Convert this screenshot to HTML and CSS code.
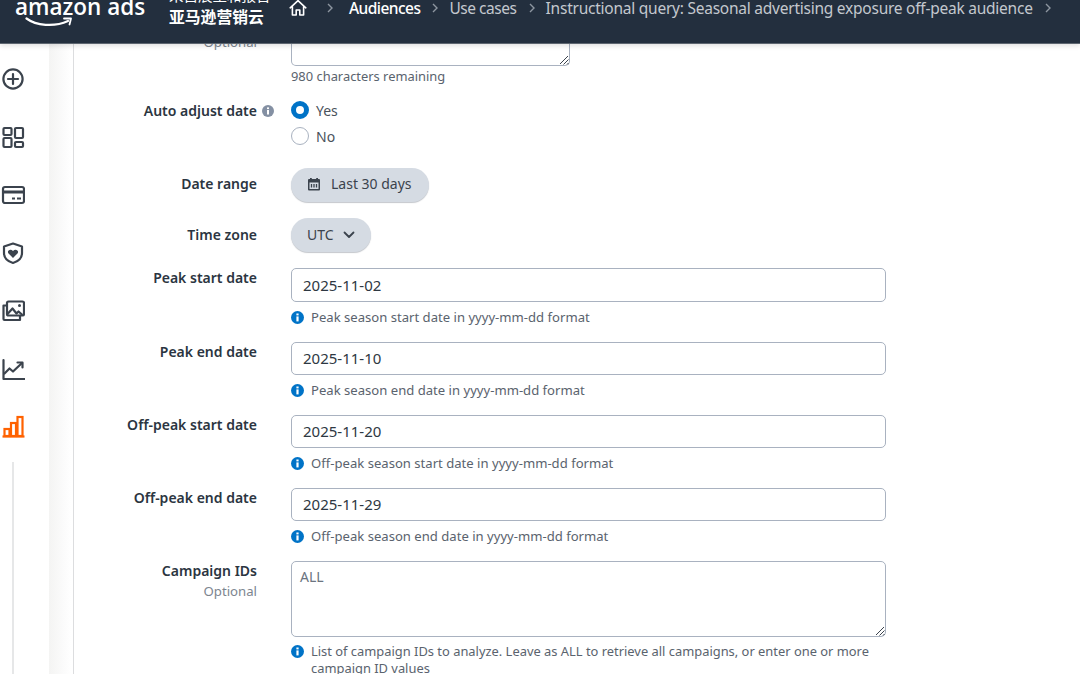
FILE: index.html
```html
<!DOCTYPE html>
<html lang="en">
<head>
<meta charset="utf-8">
<title>Seasonal advertising exposure off-peak audience</title>
<link rel="stylesheet" href="styles.css">
</head>
<body>
<header class="topbar">
  <div class="brand">
    <span class="brand-name">amazon ads</span>
    <svg class="smile" viewBox="0 0 48 11" width="48" height="11"><path d="M1.500 1.500C11 8.500 29 10.500 43 4" fill="none" stroke="#fff" stroke-width="2.200" stroke-linecap="round"/><path d="M39 1.500L46 1.500L44.500 7.500" fill="none" stroke="#fff" stroke-width="1.800" stroke-linecap="round" stroke-linejoin="round"/></svg>
  </div>
  <div class="product">
    <span class="product-top">来自展望和报告</span>
    <span class="product-name">亚马逊营销云</span>
  </div>
  <nav class="crumbs">
    <svg class="home" viewBox="0 0 18 18" width="18" height="18"><path d="M1.200 8.800L9 1.600l7.800 7.200M3.400 7.400V16h3.800v-5h3.600v5h3.800V7.400" fill="none" stroke="#fff" stroke-width="1.600" stroke-linejoin="round" stroke-linecap="round"/></svg>
    <svg class="chev chev-first" viewBox="0 0 8 12" width="8" height="12"><path d="M2 2l4 4-4 4" fill="none" stroke="#8d96a0" stroke-width="1.400"/></svg>
    <span class="crumb crumb-active">Audiences</span>
    <svg class="chev" viewBox="0 0 8 12" width="8" height="12"><path d="M2 2l4 4-4 4" fill="none" stroke="#8d96a0" stroke-width="1.400"/></svg>
    <span class="crumb crumb-use">Use cases</span>
    <svg class="chev" viewBox="0 0 8 12" width="8" height="12"><path d="M2 2l4 4-4 4" fill="none" stroke="#8d96a0" stroke-width="1.400"/></svg>
    <span class="crumb">Instructional query: Seasonal advertising exposure off-peak audience</span>
    <svg class="chev" viewBox="0 0 8 12" width="8" height="12"><path d="M2 2l4 4-4 4" fill="none" stroke="#8d96a0" stroke-width="1.400"/></svg>
  </nav>
</header>
<div class="layout">
  <aside class="rail">
    <svg class="rail-icon" viewBox="0 0 24 24" width="24" height="24"><circle cx="12" cy="12" r="9.600" fill="none" stroke="#3b434d" stroke-width="2.200"/><path d="M12 7v10M7 12h10" stroke="#3b434d" stroke-width="2.200" stroke-linecap="round"/></svg>
    <svg class="rail-icon" viewBox="0 0 24 24" width="24" height="24"><g fill="none" stroke="#3b434d" stroke-width="2.200"><rect x="2.500" y="3" width="8" height="7" rx="1"/><rect x="14" y="3" width="8" height="10" rx="1"/><rect x="2.500" y="13" width="8" height="9" rx="1"/><rect x="14" y="17" width="8" height="5" rx="1"/></g></svg>
    <svg class="rail-icon" viewBox="0 0 24 24" width="24" height="24"><rect x="2" y="4" width="21" height="16" rx="2" fill="none" stroke="#3b434d" stroke-width="2.200"/><path d="M2 9h21" stroke="#3b434d" stroke-width="3"/><path d="M11 15.500h3M16 15.500h4" stroke="#3b434d" stroke-width="2.200"/></svg>
    <svg class="rail-icon" viewBox="0 0 24 24" width="24" height="24"><path d="M12 2.500l9 3v6.500c0 5-4 8.500-9 10-5-1.500-9-5-9-10V5.500z" fill="none" stroke="#3b434d" stroke-width="2.200" stroke-linejoin="round"/><path d="M12 17l-4.700-4.800c-1.600-2.500 2.200-5 4.700-2.200 2.500-2.800 6.300-.3 4.700 2.200z" fill="#3b434d"/></svg>
    <svg class="rail-icon" viewBox="0 0 24 24" width="24" height="24"><g fill="none" stroke="#3b434d" stroke-width="2.200" stroke-linejoin="round"><rect x="6" y="2.500" width="17" height="14" rx="1.500"/><path d="M6 6.500H2.500v13.500a1 1 0 0 0 1 1H19v-4.500"/><path d="M6.500 15l5-5.500 4 5 2-2 4 3.500"/></g><circle cx="18.500" cy="6.500" r="1.500" fill="#3b434d"/></svg>
    <svg class="rail-icon" viewBox="0 0 24 24" width="24" height="24"><g fill="none" stroke="#3b434d" stroke-width="2.200" stroke-linecap="round" stroke-linejoin="round"><path d="M2.500 3v19h21"/><path d="M3.500 16.500l5-5 3.500 3 9-8.500"/><path d="M16.500 5.500h5v5"/></g></svg>
    <svg class="rail-icon rail-icon-active" viewBox="0 0 24 24" width="24" height="24"><g fill="none" stroke="#ff6200" stroke-width="2.200"><rect x="3.500" y="15" width="5" height="7"/><rect x="10" y="9" width="5" height="13"/><rect x="16.500" y="3" width="5" height="19"/><path d="M1.500 22.500h22"/></g></svg>
    <div class="rail-line"></div>
  </aside>
  <div class="gutter"></div>
  <main class="form">
    <div class="field field-first">
      <div class="label-cell"><span class="label-sub">Optional</span></div>
      <div class="control">
        <div class="textarea textarea-cut"><svg class="grip" viewBox="0 0 10 10" width="10" height="10"><path d="M1 9l8-8M4.500 9.500l5-5M8 9.500l1.500-1.500" stroke="#3b434d" stroke-width="1"/></svg></div>
        <div class="count">980 characters remaining</div>
      </div>
    </div>
    <div class="field field-radio">
      <div class="label-cell label-with-icon"><span class="label">Auto adjust date</span><svg viewBox="0 0 12 12" width="12" height="12"><circle cx="6" cy="6" r="6" fill="#8490a3"/><rect x="5" y="5" width="2" height="4.500" fill="#fff"/><rect x="5" y="2.400" width="2" height="1.700" fill="#fff"/></svg></div>
      <div class="control radios">
        <div class="radio-row"><span class="radio radio-on"></span><span class="radio-text">Yes</span></div>
        <div class="radio-row"><span class="radio"></span><span class="radio-text">No</span></div>
      </div>
    </div>
    <div class="field field-btn field-range">
      <div class="label-cell label-mid label-range"><span class="label">Date range</span></div>
      <div class="control"><div class="pill pill-date"><svg viewBox="0 0 14 14" width="14" height="14"><path d="M1 3a1 1 0 0 1 1-1h10a1 1 0 0 1 1 1v9.500a1 1 0 0 1-1 1H2a1 1 0 0 1-1-1z" fill="#3b434d"/><rect x="3" y="1" width="1.800" height="2.500" fill="#3b434d"/><rect x="9.200" y="1" width="1.800" height="2.500" fill="#3b434d"/><rect x="2.500" y="5.500" width="9" height="6.500" fill="#d5dbe3"/><path d="M4.500 7v3.500M7 7v3.500M9.500 7v3.500" stroke="#3b434d" stroke-width="1.300"/></svg><span>Last 30 days</span></div></div>
    </div>
    <div class="field field-btn field-zone">
      <div class="label-cell label-mid"><span class="label">Time zone</span></div>
      <div class="control"><div class="pill pill-zone"><span>UTC</span><svg viewBox="0 0 12 8" width="12" height="8"><path d="M1.500 1.500L6 6l4.500-4.500" fill="none" stroke="#3b434d" stroke-width="1.800" stroke-linecap="round" stroke-linejoin="round"/></svg></div></div>
    </div>
    <div class="field field-date field-peak">
      <div class="label-cell"><span class="label">Peak start date</span></div>
      <div class="control">
        <div class="input">2025-11-02</div>
        <div class="help"><svg class="info" viewBox="0 0 13 13" width="13" height="13"><circle cx="6.500" cy="6.500" r="6.500" fill="#0073c7"/><rect x="5.400" y="5.400" width="2.200" height="5" fill="#fff"/><rect x="5.400" y="2.500" width="2.200" height="1.900" fill="#fff"/></svg><span>Peak season start date in yyyy-mm-dd format</span></div>
      </div>
    </div>
    <div class="field field-date">
      <div class="label-cell"><span class="label">Peak end date</span></div>
      <div class="control">
        <div class="input">2025-11-10</div>
        <div class="help"><svg class="info" viewBox="0 0 13 13" width="13" height="13"><circle cx="6.500" cy="6.500" r="6.500" fill="#0073c7"/><rect x="5.400" y="5.400" width="2.200" height="5" fill="#fff"/><rect x="5.400" y="2.500" width="2.200" height="1.900" fill="#fff"/></svg><span>Peak season end date in yyyy-mm-dd format</span></div>
      </div>
    </div>
    <div class="field field-date">
      <div class="label-cell"><span class="label">Off-peak start date</span></div>
      <div class="control">
        <div class="input">2025-11-20</div>
        <div class="help"><svg class="info" viewBox="0 0 13 13" width="13" height="13"><circle cx="6.500" cy="6.500" r="6.500" fill="#0073c7"/><rect x="5.400" y="5.400" width="2.200" height="5" fill="#fff"/><rect x="5.400" y="2.500" width="2.200" height="1.900" fill="#fff"/></svg><span>Off-peak season start date in yyyy-mm-dd format</span></div>
      </div>
    </div>
    <div class="field field-date">
      <div class="label-cell"><span class="label">Off-peak end date</span></div>
      <div class="control">
        <div class="input">2025-11-29</div>
        <div class="help"><svg class="info" viewBox="0 0 13 13" width="13" height="13"><circle cx="6.500" cy="6.500" r="6.500" fill="#0073c7"/><rect x="5.400" y="5.400" width="2.200" height="5" fill="#fff"/><rect x="5.400" y="2.500" width="2.200" height="1.900" fill="#fff"/></svg><span>Off-peak season end date in yyyy-mm-dd format</span></div>
      </div>
    </div>
    <div class="field field-ids">
      <div class="label-cell label-stack"><span class="label">Campaign IDs</span><span class="label-sub">Optional</span></div>
      <div class="control">
        <div class="textarea textarea-ids">ALL<svg class="grip" viewBox="0 0 10 10" width="10" height="10"><path d="M1 9l8-8M4.500 9.500l5-5M8 9.500l1.500-1.500" stroke="#3b434d" stroke-width="1"/></svg></div>
        <div class="help help-long"><svg class="info" viewBox="0 0 13 13" width="13" height="13"><circle cx="6.500" cy="6.500" r="6.500" fill="#0073c7"/><rect x="5.400" y="5.400" width="2.200" height="5" fill="#fff"/><rect x="5.400" y="2.500" width="2.200" height="1.900" fill="#fff"/></svg><span>List of campaign IDs to analyze. Leave as ALL to retrieve all campaigns, or enter one or more campaign ID values</span></div>
      </div>
    </div>
  </main>
</div>
</body>
</html>
```
FILE: styles.css
```css
* { box-sizing: border-box; }
html, body { margin: 0; height: 674px; overflow: hidden; background: #fff; }
body { font-family: "Noto Sans", "Noto Sans CJK SC", sans-serif; font-size: 14px; color: #3b434d; }

.topbar {
  position: relative; z-index: 2; height: 44px; background: #232f3e;
  border-bottom: 1px solid #5d6670; box-shadow: 0 2px 5px rgba(0,0,0,.12);
  display: flex; align-items: flex-start; overflow: hidden; padding-left: 15px; color: #fff;
}
.brand { width: 154px; flex: none; margin-top: -9px; display: flex; flex-direction: column; }
.brand-name { font-family: "Open Sans", sans-serif; font-size: 22.500px; font-weight: 600; line-height: 32px; white-space: nowrap; }
.smile { margin: -6px 0 0 10px; }
.product { width: 119px; flex: none; display: flex; flex-direction: column; margin-top: -14px; gap: 0; }
.product-top { font-size: 14.500px; line-height: 19px; white-space: nowrap; }
.product-name { font-family: "Noto Sans CJK SC", sans-serif; font-size: 15.800px; font-weight: 700; line-height: 24px; white-space: nowrap; }
.crumbs { display: flex; align-items: center; height: 16px; font-size: 15.500px; color: #c3c8ce; white-space: nowrap; }
.home { flex: none; margin-left: 1px; }
.chev { flex: none; margin: 0 10px 0 11px; }
.chev-first { margin: 0 15px 0 19px; }
.crumb { letter-spacing: -.24px; }
.crumb-active { color: #fff; font-weight: 500; letter-spacing: -.55px; }
.crumb-use { letter-spacing: -.45px; }

.layout { display: flex; height: 630px; }
.rail { width: 49px; flex: none; display: flex; flex-direction: column; padding: 23px 0 0 1px; gap: 34px; background: #fff; }
.rail-icon { flex: none; }
.rail-icon-active { margin-top: -1px; }
.rail-line { width: 2px; flex: 1; margin: -10px 0 0 11px; background: #e6e7e8; }
.gutter { width: 25px; flex: none; background: linear-gradient(90deg, #f4f4f3, #fbfbfb 60%, #fff 92%); border-right: 1px solid #dcdddf; }

.form { flex: 1; min-width: 0; }
.field { display: grid; grid-template-columns: 183px 595px; column-gap: 34px; }
.label-cell { text-align: right; }
.label { font-size: 14px; font-weight: 600; line-height: 20px; color: #2b3541; }
.label-sub { font-size: 13.200px; line-height: 20px; color: #7c858f; }

.field-first { margin-top: -12px; }
.textarea { position: relative; border: 1px solid #a9b2c0; border-radius: 5px; background: #fff; }
.textarea-cut { width: 279px; height: 34px; border-top: none; border-radius: 0 0 5px 5px; }
.grip { position: absolute; right: 0; bottom: 0; }
.count { font-size: 12.900px; line-height: 18px; margin-top: 1px; color: #5a636e; }

.field-radio { margin-top: 16px; }
.label-with-icon { display: flex; justify-content: flex-end; align-items: center; gap: 5px; height: 20px; margin-right: -17px; }
.radios { display: flex; flex-direction: column; gap: 8px; }
.radio-row { display: flex; align-items: center; gap: 7px; height: 18px; }
.radio { width: 18px; height: 18px; border-radius: 50%; border: 1px solid #a9b2c0; background: #fff; flex: none; }
.radio-on { border: 5px solid #0073c7; }
.radio-text { font-size: 14px; color: #4a525c; }

.field-btn { margin-top: 16px; }
.field-range { margin-top: 23px; }
.label-mid { display: flex; justify-content: flex-end; align-items: center; }
.label-range { padding-bottom: 2px; }
.pill { display: inline-flex; align-items: center; height: 34px; border-radius: 17px; background: #d5dbe3; box-shadow: 0 1px 1px rgba(60,70,85,.3); font-size: 14px; color: #3b434d; }
.pill-date { padding: 0 17px 3px 16px; gap: 10px; }
.pill-zone { padding: 0 16px 1px; gap: 9px; }

.field-peak { margin-top: 16px; }
.field-date { margin-bottom: 16px; }
.input { height: 34px; border: 1px solid #a9b2c0; border-radius: 5px; padding: 0 11px; display: flex; align-items: center; font-size: 15px; color: #2e3842; background: #fff; }
.field-date + .field-date .input { height: 33px; padding-bottom: 2px; }
.help { display: flex; gap: 7px; margin-top: 7px; font-size: 13.100px; line-height: 17px; color: #5a636e; }
.help-long { margin-top: 6px; font-size: 12.900px; }
.info { flex: none; margin-top: 2px; }

.field-ids { margin-top: 0; }
.label-stack { display: flex; flex-direction: column; }
.textarea-ids { height: 76px; padding: 5px 8px; font-size: 14px; line-height: 20px; color: #6b7480; }
```
